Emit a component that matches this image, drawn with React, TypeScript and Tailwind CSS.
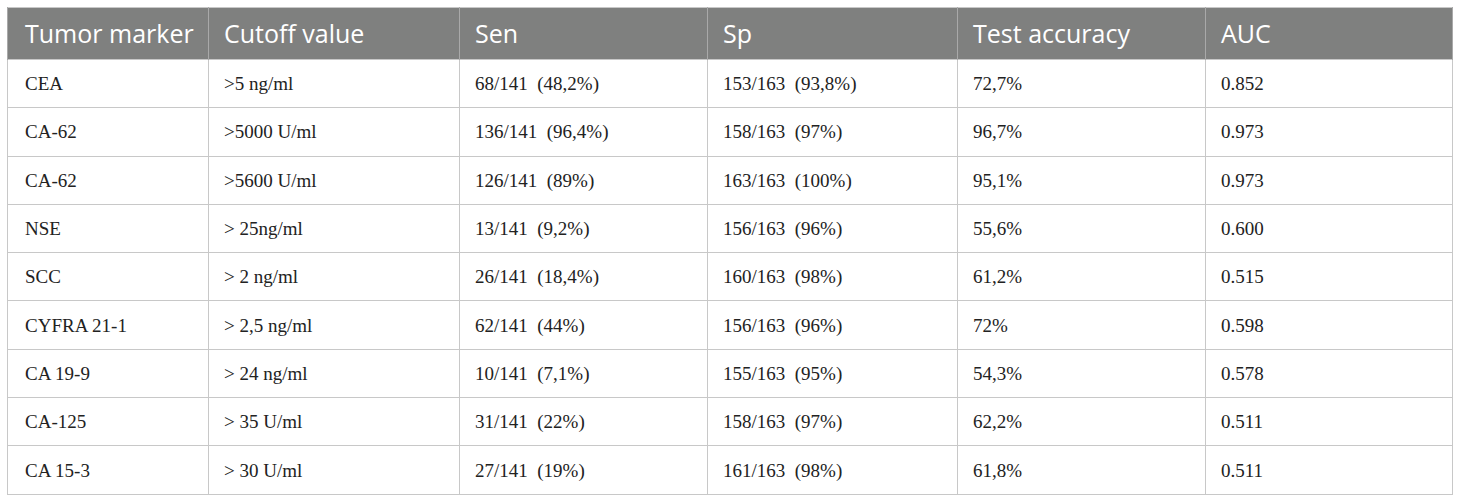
const rows = [
  ["CEA", ">5 ng/ml", "68/141 (48,2%)", "153/163 (93,8%)", "72,7%", "0.852"],
  ["CA-62", ">5000 U/ml", "136/141 (96,4%)", "158/163 (97%)", "96,7%", "0.973"],
  ["CA-62", ">5600 U/ml", "126/141 (89%)", "163/163 (100%)", "95,1%", "0.973"],
  ["NSE", "> 25ng/ml", "13/141 (9,2%)", "156/163 (96%)", "55,6%", "0.600"],
  ["SCC", "> 2 ng/ml", "26/141 (18,4%)", "160/163 (98%)", "61,2%", "0.515"],
  ["CYFRA 21-1", "> 2,5 ng/ml", "62/141 (44%)", "156/163 (96%)", "72%", "0.598"],
  ["CA 19-9", "> 24 ng/ml", "10/141 (7,1%)", "155/163 (95%)", "54,3%", "0.578"],
  ["CA-125", "> 35 U/ml", "31/141 (22%)", "158/163 (97%)", "62,2%", "0.511"],
  ["CA 15-3", "> 30 U/ml", "27/141 (19%)", "161/163 (98%)", "61,8%", "0.511"],
];

const headers = ["Tumor marker", "Cutoff value", "Sen", "Sp", "Test accuracy", "AUC"];
const widths = [201, 251, 248, 250, 248, 247];

export default function App() {
  return (
    <div className="min-h-screen bg-white pl-[7px] pt-[7px]">
      <table className="table-fixed border-collapse border border-[#c8c8c8]" style={{ width: 1445 }}>
        <colgroup>
          {widths.map((w, i) => (
            <col key={i} style={{ width: w }} />
          ))}
        </colgroup>
        <thead>
          <tr className="h-[52px] bg-[#7f807f]">
            {headers.map((h, i) => (
              <th
                key={h}
                className={`border-x border-[#a9a9a9] text-left align-middle font-['Open_Sans',sans-serif] text-[25px] font-normal leading-none text-white ${
                  i === 0 ? "pl-[17px] pr-[4px]" : "px-[15px]"
                }`}
              >
                {h}
              </th>
            ))}
          </tr>
        </thead>
        <tbody>
          {rows.map((r, ri) => (
            <tr key={ri} className="h-[48.3px]">
              {r.map((c, ci) => (
                <td
                  key={ci}
                  className={`border border-[#c8c8c8] align-middle font-['Liberation_Serif',serif] text-[19px] leading-none text-[#222] whitespace-pre ${
                    ci === 0 ? "pl-[17px] pr-[4px]" : "px-[15px]"
                  }`}
                >
                  {c.replace(" (", "  (")}
                </td>
              ))}
            </tr>
          ))}
        </tbody>
      </table>
    </div>
  );
}
